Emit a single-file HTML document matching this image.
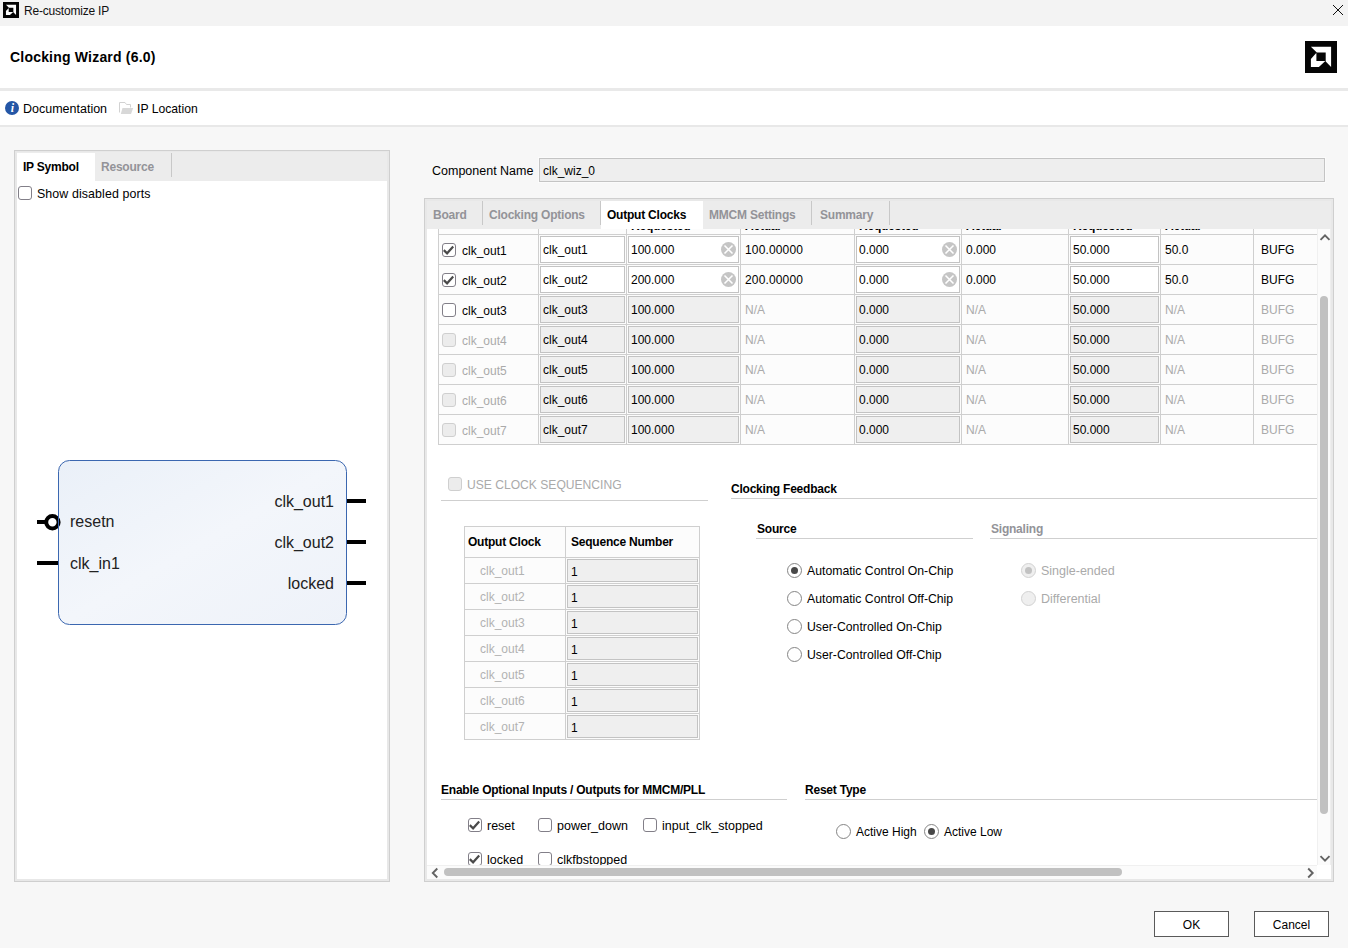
<!DOCTYPE html>
<html><head><meta charset="utf-8"><title>Re-customize IP</title>
<style>
*{box-sizing:border-box;margin:0;padding:0}
html,body{width:1348px;height:948px;overflow:hidden;background:#f7f7f7;font-family:"Liberation Sans",Arial,sans-serif;font-size:12px;color:#000}
.abs,.t,.b,.g,.gb{position:absolute;white-space:nowrap}
.t,.b,.g,.gb{line-height:14px;height:14px}
.b{font-weight:bold;letter-spacing:-0.22px}
.g{color:#aaaaaa}
.gb{color:#939398;font-weight:bold;letter-spacing:-0.22px}
.ln{position:absolute;background:#cfcfcf}
.cb{position:absolute;width:14px;height:14px;border:1px solid #827f88;border-radius:3px;background:#fff}
.cb.d{border-color:#cfcfcf;background:#ececec}
.cb svg{position:absolute;left:0;top:0}
.rd{position:absolute;width:15px;height:15px;border:1px solid #858585;border-radius:50%;background:#fff}
.rd.d{border-color:#d2d2d2;background:#efefef}
.rd.on::after{content:"";position:absolute;left:3px;top:3px;width:7px;height:7px;border-radius:50%;background:#484848}
.rd.d.on::after{background:#c2c2c2}
.in{position:absolute;border:1px solid #c3c3c3;background:#fff;height:27px;line-height:27px;padding-left:2px;white-space:nowrap;box-shadow:0 0 0 1px #fcfcfc}
.in.d{background:#efefef}
.clr{position:absolute;width:15px;height:15px;border-radius:50%;background:#c5c5c5}
.btn{position:absolute;border:1px solid #5a5a5a;background:#fff;text-align:center;height:26px;line-height:26px;width:75px;font-size:12px}
</style></head><body>

<div class="abs" style="left:0;top:0;width:1348px;height:26px;background:#f3f3f3"></div>
<svg class="abs" style="left:3px;top:2px" width="16" height="16" viewBox="0 0 32 32"><rect width="32" height="32" fill="#050505"/><path d="M5.9 5.7H26.1V26L20.7 20.4V11.6H11.8Z" fill="#fff"/><path d="M5.9 18L11 12.3H11.4V20.1H20.3L13.900 26H5.9Z" fill="#fff"/></svg>
<div class="abs" style="left:24px;top:3px;font-size:12px;line-height:16px;color:#111;letter-spacing:-0.2px">Re-customize IP</div>
<svg class="abs" style="left:1332px;top:4px" width="12" height="12" viewBox="0 0 12 12"><path d="M1 1L11 11M11 1L1 11" stroke="#111" stroke-width="1" fill="none"/></svg>
<div class="abs" style="left:0;top:26px;width:1348px;height:62px;background:#fff"></div>
<div class="abs" style="left:10px;top:48px;font-size:14px;font-weight:bold;line-height:18px;letter-spacing:0.2px">Clocking Wizard (6.0)</div>
<svg class="abs" style="left:1305px;top:41px" width="32" height="32" viewBox="0 0 32 32"><rect width="32" height="32" fill="#050505"/><path d="M5.9 5.7H26.1V26L20.7 20.4V11.6H11.8Z" fill="#fff"/><path d="M5.9 18L11 12.3H11.4V20.1H20.3L13.900 26H5.9Z" fill="#fff"/></svg>
<div class="abs" style="left:0;top:88px;width:1348px;height:3px;background:#e9e9e9"></div>
<div class="abs" style="left:0;top:91px;width:1348px;height:34px;background:#fff"></div>
<div class="abs" style="left:0;top:125px;width:1348px;height:2px;background:#e8e8e8"></div>
<svg class="abs" style="left:5px;top:101px" width="14" height="14" viewBox="0 0 14 14"><circle cx="7" cy="7" r="7" fill="#2456a6"/><text x="7.300" y="11.300" font-family="Liberation Serif,serif" font-size="12" font-style="italic" font-weight="bold" fill="#fff" text-anchor="middle">i</text></svg>
<div class="t" style="left:23px;top:102px;font-size:12.5px">Documentation</div>
<svg class="abs" style="left:119px;top:102px" width="15" height="13" viewBox="119 102 15 13"><path d="M119.500 112.500V102.500H125L126.500 104.500H130.500V107.500" fill="none" stroke="#d2d2d2" stroke-width="1"/><path d="M122.500 108H133.200L131 114H120.800Z" fill="#d8d8d8"/></svg>
<div class="t" style="left:137px;top:102px;font-size:12.2px">IP Location</div>
<div class="abs" style="left:14px;top:150px;width:376px;height:732px;background:#fff;border:1px solid #cfcfcf;box-shadow:inset 0 0 0 2px #e8e8e8"></div>
<div class="abs" style="left:17px;top:152px;width:370px;height:29px;background:#ececec"></div>
<div class="abs" style="left:17px;top:153px;width:78px;height:28px;background:#fff"></div>
<div class="b" style="left:23px;top:160px">IP Symbol</div>
<div class="gb" style="left:101px;top:160px">Resource</div>
<div class="ln" style="left:171px;top:153px;width:1px;height:24px;background:#c8c8c8"></div>
<div class="cb" style="left:18px;top:186px"></div>
<div class="t" style="left:37px;top:187px;font-size:12.4px;letter-spacing:0.1px">Show disabled ports</div>
<svg class="abs" style="left:30px;top:450px" width="350" height="190" viewBox="30 450 350 190">
<defs><linearGradient id="gb" x1="0" y1="0" x2="1" y2="1"><stop offset="0" stop-color="#eaf0f8"/><stop offset="0.5" stop-color="#f3f6fb"/><stop offset="1" stop-color="#eef2f9"/></linearGradient></defs>
<rect x="58.5" y="460.5" width="288" height="164" rx="11" ry="11" fill="url(#gb)"/>
<path d="M37 522H46M37 563H58M347 501H366M347 542H366M347 583H366" stroke="#000" stroke-width="4" fill="none"/>
<circle cx="52.400" cy="522.300" r="6.200" fill="#fff" stroke="#000" stroke-width="4"/>
<rect x="58.5" y="460.5" width="288" height="164" rx="11" ry="11" fill="none" stroke="#3b67b0" stroke-width="1"/>
<g font-family="Liberation Sans,Arial,sans-serif" font-size="16" fill="#222">
<text x="70" y="527">resetn</text><text x="70" y="569">clk_in1</text>
<text x="334" y="507" text-anchor="end">clk_out1</text><text x="334" y="548" text-anchor="end">clk_out2</text><text x="334" y="589" text-anchor="end">locked</text>
</g></svg>
<div class="t" style="left:432px;top:164px;font-size:12.5px">Component Name</div>
<div class="abs" style="left:539px;top:158px;width:786px;height:24px;border:1px solid #c4c4c4;background:#eeeeee;line-height:24px;padding-left:3px;box-shadow:0 0 0 1px #fbfbfb">clk_wiz_0</div>
<div class="abs" style="left:424px;top:198px;width:910px;height:684px;background:#fff;border:1px solid #cfcfcf;box-shadow:inset 0 0 0 2px #e8e8e8"></div>
<div class="abs" style="left:427px;top:201px;width:904px;height:28px;background:#ececec"></div>
<div class="abs" style="left:601px;top:201px;width:102px;height:28px;background:#fff"></div>
<div class="gb" style="left:433px;top:208px">Board</div>
<div class="gb" style="left:489px;top:208px">Clocking Options</div>
<div class="b" style="left:607px;top:208px">Output Clocks</div>
<div class="gb" style="left:709px;top:208px">MMCM Settings</div>
<div class="gb" style="left:820px;top:208px">Summary</div>
<div class="ln" style="left:482px;top:201px;width:1px;height:24px;background:#c8c8c8"></div>
<div class="ln" style="left:600px;top:201px;width:1px;height:24px;background:#c8c8c8"></div>
<div class="ln" style="left:811px;top:201px;width:1px;height:24px;background:#c8c8c8"></div>
<div class="ln" style="left:889px;top:201px;width:1px;height:24px;background:#c8c8c8"></div>
<div class="abs" style="left:438px;top:229px;width:879px;height:216px;background:#fcfcfc"></div>
<div class="abs" style="left:438px;top:229px;width:879px;height:4px;overflow:hidden">
<div class="b" style="left:193px;top:-10px">Requested</div>
<div class="b" style="left:307px;top:-10px">Actual</div>
<div class="b" style="left:421px;top:-10px">Requested</div>
<div class="b" style="left:528px;top:-10px">Actual</div>
<div class="b" style="left:635px;top:-10px">Requested</div>
<div class="b" style="left:727px;top:-10px">Actual</div>
</div>
<div class="ln" style="left:438px;top:234px;width:879px;height:1px"></div>
<div class="ln" style="left:438px;top:264px;width:879px;height:1px"></div>
<div class="ln" style="left:438px;top:294px;width:879px;height:1px"></div>
<div class="ln" style="left:438px;top:324px;width:879px;height:1px"></div>
<div class="ln" style="left:438px;top:354px;width:879px;height:1px"></div>
<div class="ln" style="left:438px;top:384px;width:879px;height:1px"></div>
<div class="ln" style="left:438px;top:414px;width:879px;height:1px"></div>
<div class="ln" style="left:438px;top:444px;width:879px;height:1px"></div>
<div class="ln" style="left:438px;top:229px;width:1px;height:216px"></div>
<div class="ln" style="left:538px;top:229px;width:1px;height:216px"></div>
<div class="ln" style="left:626px;top:229px;width:1px;height:216px"></div>
<div class="ln" style="left:740px;top:229px;width:1px;height:216px"></div>
<div class="ln" style="left:854px;top:229px;width:1px;height:216px"></div>
<div class="ln" style="left:961px;top:229px;width:1px;height:216px"></div>
<div class="ln" style="left:1068px;top:229px;width:1px;height:216px"></div>
<div class="ln" style="left:1160px;top:229px;width:1px;height:216px"></div>
<div class="ln" style="left:1253px;top:229px;width:1px;height:216px"></div>
<div class="cb" style="left:442px;top:243px"><svg width="12" height="12" viewBox="0 0 12 12"><path d="M0.800 6.100L4.100 9.300L10.200 2.600" stroke="#4a4a4a" stroke-width="2.200" fill="none"/></svg></div>
<div class="t" style="left:462px;top:244px">clk_out1</div>
<div class="in" style="left:540px;top:236px;width:85px">clk_out1</div>
<div class="in" style="left:628px;top:236px;width:111px">100.000</div>
<div class="in" style="left:856px;top:236px;width:104px">0.000</div>
<div class="in" style="left:1070px;top:236px;width:89px">50.000</div>
<div class="clr" style="left:721px;top:242px"><svg width="15" height="15" viewBox="0 0 15 15"><path d="M3.500 3.500L11.500 11.500M11.500 3.500L3.500 11.500" stroke="#fff" stroke-width="1.600"/></svg></div>
<div class="clr" style="left:942px;top:242px"><svg width="15" height="15" viewBox="0 0 15 15"><path d="M3.500 3.500L11.500 11.500M11.500 3.500L3.500 11.500" stroke="#fff" stroke-width="1.600"/></svg></div>
<div class="t" style="left:745px;top:243px;letter-spacing:0.15px">100.00000</div>
<div class="t" style="left:966px;top:243px">0.000</div>
<div class="t" style="left:1165px;top:243px">50.0</div>
<div class="t" style="left:1261px;top:243px">BUFG</div>
<div class="cb" style="left:442px;top:273px"><svg width="12" height="12" viewBox="0 0 12 12"><path d="M0.800 6.100L4.100 9.300L10.200 2.600" stroke="#4a4a4a" stroke-width="2.200" fill="none"/></svg></div>
<div class="t" style="left:462px;top:274px">clk_out2</div>
<div class="in" style="left:540px;top:266px;width:85px">clk_out2</div>
<div class="in" style="left:628px;top:266px;width:111px">200.000</div>
<div class="in" style="left:856px;top:266px;width:104px">0.000</div>
<div class="in" style="left:1070px;top:266px;width:89px">50.000</div>
<div class="clr" style="left:721px;top:272px"><svg width="15" height="15" viewBox="0 0 15 15"><path d="M3.500 3.500L11.500 11.500M11.500 3.500L3.500 11.500" stroke="#fff" stroke-width="1.600"/></svg></div>
<div class="clr" style="left:942px;top:272px"><svg width="15" height="15" viewBox="0 0 15 15"><path d="M3.500 3.500L11.500 11.500M11.500 3.500L3.500 11.500" stroke="#fff" stroke-width="1.600"/></svg></div>
<div class="t" style="left:745px;top:273px;letter-spacing:0.15px">200.00000</div>
<div class="t" style="left:966px;top:273px">0.000</div>
<div class="t" style="left:1165px;top:273px">50.0</div>
<div class="t" style="left:1261px;top:273px">BUFG</div>
<div class="cb" style="left:442px;top:303px"></div>
<div class="t" style="left:462px;top:304px">clk_out3</div>
<div class="in d" style="left:540px;top:296px;width:85px">clk_out3</div>
<div class="in d" style="left:628px;top:296px;width:111px">100.000</div>
<div class="in d" style="left:856px;top:296px;width:104px">0.000</div>
<div class="in d" style="left:1070px;top:296px;width:89px">50.000</div>
<div class="g" style="left:745px;top:303px">N/A</div>
<div class="g" style="left:966px;top:303px">N/A</div>
<div class="g" style="left:1165px;top:303px">N/A</div>
<div class="g" style="left:1261px;top:303px">BUFG</div>
<div class="cb d" style="left:442px;top:333px"></div>
<div class="g" style="left:462px;top:334px">clk_out4</div>
<div class="in d" style="left:540px;top:326px;width:85px">clk_out4</div>
<div class="in d" style="left:628px;top:326px;width:111px">100.000</div>
<div class="in d" style="left:856px;top:326px;width:104px">0.000</div>
<div class="in d" style="left:1070px;top:326px;width:89px">50.000</div>
<div class="g" style="left:745px;top:333px">N/A</div>
<div class="g" style="left:966px;top:333px">N/A</div>
<div class="g" style="left:1165px;top:333px">N/A</div>
<div class="g" style="left:1261px;top:333px">BUFG</div>
<div class="cb d" style="left:442px;top:363px"></div>
<div class="g" style="left:462px;top:364px">clk_out5</div>
<div class="in d" style="left:540px;top:356px;width:85px">clk_out5</div>
<div class="in d" style="left:628px;top:356px;width:111px">100.000</div>
<div class="in d" style="left:856px;top:356px;width:104px">0.000</div>
<div class="in d" style="left:1070px;top:356px;width:89px">50.000</div>
<div class="g" style="left:745px;top:363px">N/A</div>
<div class="g" style="left:966px;top:363px">N/A</div>
<div class="g" style="left:1165px;top:363px">N/A</div>
<div class="g" style="left:1261px;top:363px">BUFG</div>
<div class="cb d" style="left:442px;top:393px"></div>
<div class="g" style="left:462px;top:394px">clk_out6</div>
<div class="in d" style="left:540px;top:386px;width:85px">clk_out6</div>
<div class="in d" style="left:628px;top:386px;width:111px">100.000</div>
<div class="in d" style="left:856px;top:386px;width:104px">0.000</div>
<div class="in d" style="left:1070px;top:386px;width:89px">50.000</div>
<div class="g" style="left:745px;top:393px">N/A</div>
<div class="g" style="left:966px;top:393px">N/A</div>
<div class="g" style="left:1165px;top:393px">N/A</div>
<div class="g" style="left:1261px;top:393px">BUFG</div>
<div class="cb d" style="left:442px;top:423px"></div>
<div class="g" style="left:462px;top:424px">clk_out7</div>
<div class="in d" style="left:540px;top:416px;width:85px">clk_out7</div>
<div class="in d" style="left:628px;top:416px;width:111px">100.000</div>
<div class="in d" style="left:856px;top:416px;width:104px">0.000</div>
<div class="in d" style="left:1070px;top:416px;width:89px">50.000</div>
<div class="g" style="left:745px;top:423px">N/A</div>
<div class="g" style="left:966px;top:423px">N/A</div>
<div class="g" style="left:1165px;top:423px">N/A</div>
<div class="g" style="left:1261px;top:423px">BUFG</div>
<div class="cb d" style="left:448px;top:477px"></div>
<div class="g" style="left:467px;top:478px;font-size:12.1px">USE CLOCK SEQUENCING</div>
<div class="ln" style="left:441px;top:500px;width:267px;height:1px"></div>
<div class="abs" style="left:464px;top:526px;width:236px;height:214px;background:#fcfcfc;border:1px solid #cfcfcf"></div>
<div class="ln" style="left:565px;top:526px;width:1px;height:214px"></div>
<div class="b" style="left:468px;top:535px">Output Clock</div>
<div class="b" style="left:571px;top:535px">Sequence Number</div>
<div class="ln" style="left:464px;top:557px;width:236px;height:1px"></div>
<div class="g" style="left:480px;top:564px;color:#b2b2b2">clk_out1</div>
<div class="in d" style="left:567px;top:559px;width:131px;height:23px;line-height:24px;padding-left:3px">1</div>
<div class="ln" style="left:464px;top:583px;width:236px;height:1px"></div>
<div class="g" style="left:480px;top:590px;color:#b2b2b2">clk_out2</div>
<div class="in d" style="left:567px;top:585px;width:131px;height:23px;line-height:24px;padding-left:3px">1</div>
<div class="ln" style="left:464px;top:609px;width:236px;height:1px"></div>
<div class="g" style="left:480px;top:616px;color:#b2b2b2">clk_out3</div>
<div class="in d" style="left:567px;top:611px;width:131px;height:23px;line-height:24px;padding-left:3px">1</div>
<div class="ln" style="left:464px;top:635px;width:236px;height:1px"></div>
<div class="g" style="left:480px;top:642px;color:#b2b2b2">clk_out4</div>
<div class="in d" style="left:567px;top:637px;width:131px;height:23px;line-height:24px;padding-left:3px">1</div>
<div class="ln" style="left:464px;top:661px;width:236px;height:1px"></div>
<div class="g" style="left:480px;top:668px;color:#b2b2b2">clk_out5</div>
<div class="in d" style="left:567px;top:663px;width:131px;height:23px;line-height:24px;padding-left:3px">1</div>
<div class="ln" style="left:464px;top:687px;width:236px;height:1px"></div>
<div class="g" style="left:480px;top:694px;color:#b2b2b2">clk_out6</div>
<div class="in d" style="left:567px;top:689px;width:131px;height:23px;line-height:24px;padding-left:3px">1</div>
<div class="ln" style="left:464px;top:713px;width:236px;height:1px"></div>
<div class="g" style="left:480px;top:720px;color:#b2b2b2">clk_out7</div>
<div class="in d" style="left:567px;top:715px;width:131px;height:23px;line-height:24px;padding-left:3px">1</div>
<div class="b" style="left:731px;top:482px">Clocking Feedback</div>
<div class="ln" style="left:731px;top:498px;width:586px;height:1px"></div>
<div class="b" style="left:757px;top:522px">Source</div>
<div class="ln" style="left:756px;top:538px;width:217px;height:1px"></div>
<div class="gb" style="left:991px;top:522px">Signaling</div>
<div class="ln" style="left:990px;top:538px;width:327px;height:1px"></div>
<div class="rd on" style="left:787px;top:563px"></div>
<div class="t" style="left:807px;top:564px;font-size:12.25px">Automatic Control On-Chip</div>
<div class="rd" style="left:787px;top:591px"></div>
<div class="t" style="left:807px;top:592px;font-size:12.25px">Automatic Control Off-Chip</div>
<div class="rd" style="left:787px;top:619px"></div>
<div class="t" style="left:807px;top:620px;font-size:12.25px">User-Controlled On-Chip</div>
<div class="rd" style="left:787px;top:647px"></div>
<div class="t" style="left:807px;top:648px;font-size:12.25px">User-Controlled Off-Chip</div>
<div class="rd d on" style="left:1021px;top:563px"></div>
<div class="g" style="left:1041px;top:564px;font-size:12.5px">Single-ended</div>
<div class="rd d" style="left:1021px;top:591px"></div>
<div class="g" style="left:1041px;top:592px;font-size:12.5px">Differential</div>
<div class="b" style="left:441px;top:783px">Enable Optional Inputs / Outputs for MMCM/PLL</div>
<div class="ln" style="left:441px;top:799px;width:346px;height:1px"></div>
<div class="b" style="left:805px;top:783px">Reset Type</div>
<div class="ln" style="left:805px;top:799px;width:512px;height:1px"></div>
<div class="abs" style="left:427px;top:800px;width:890px;height:65px;overflow:hidden">
<div class="cb" style="left:41px;top:18px"><svg width="12" height="12" viewBox="0 0 12 12"><path d="M0.800 6.100L4.100 9.300L10.200 2.600" stroke="#4a4a4a" stroke-width="2.200" fill="none"/></svg></div>
<div class="t" style="left:60px;top:19px;font-size:12.5px">reset</div>
<div class="cb" style="left:111px;top:18px"></div>
<div class="t" style="left:130px;top:19px;font-size:12.5px">power_down</div>
<div class="cb" style="left:216px;top:18px"></div>
<div class="t" style="left:235px;top:19px;font-size:12.5px">input_clk_stopped</div>
<div class="cb" style="left:41px;top:52px"><svg width="12" height="12" viewBox="0 0 12 12"><path d="M0.800 6.100L4.100 9.300L10.200 2.600" stroke="#4a4a4a" stroke-width="2.200" fill="none"/></svg></div>
<div class="t" style="left:60px;top:53px;font-size:12.5px">locked</div>
<div class="cb" style="left:111px;top:52px"></div>
<div class="t" style="left:130px;top:53px;font-size:12.5px">clkfbstopped</div>
</div>
<div class="rd" style="left:836px;top:824px"></div>
<div class="t" style="left:856px;top:825px">Active High</div>
<div class="rd on" style="left:924px;top:824px"></div>
<div class="t" style="left:944px;top:825px">Active Low</div>
<div class="abs" style="left:1317px;top:229px;width:14px;height:636px;background:#fbfbfb;border-left:1px solid #f0f0f0;border-right:1px solid #eeeeee"></div>
<div class="abs" style="left:1320px;top:296px;width:8px;height:518px;background:#c1c1c1;border-radius:4px"></div>
<svg class="abs" style="left:1319px;top:233px" width="12" height="9" viewBox="0 0 12 9"><path d="M1.500 6.800L6 2.300L10.500 6.800" stroke="#636363" stroke-width="1.900" fill="none"/></svg>
<svg class="abs" style="left:1319px;top:854px" width="12" height="9" viewBox="0 0 12 9"><path d="M1.500 2.200L6 6.700L10.500 2.200" stroke="#636363" stroke-width="1.900" fill="none"/></svg>
<div class="abs" style="left:427px;top:865px;width:890px;height:14px;background:#fbfbfb;border-top:1px solid #f0f0f0"></div>
<div class="abs" style="left:444px;top:868px;width:678px;height:8px;background:#c1c1c1;border-radius:4px"></div>
<svg class="abs" style="left:430px;top:867px" width="9" height="12" viewBox="0 0 9 12"><path d="M7.300 1.500L2.800 6L7.300 10.500" stroke="#636363" stroke-width="1.900" fill="none"/></svg>
<svg class="abs" style="left:1306px;top:867px" width="9" height="12" viewBox="0 0 9 12"><path d="M2.200 1.500L6.700 6L2.200 10.500" stroke="#636363" stroke-width="1.900" fill="none"/></svg>
<div class="btn" style="left:1154px;top:911px">OK</div>
<div class="btn" style="left:1254px;top:911px">Cancel</div>
</body></html>
